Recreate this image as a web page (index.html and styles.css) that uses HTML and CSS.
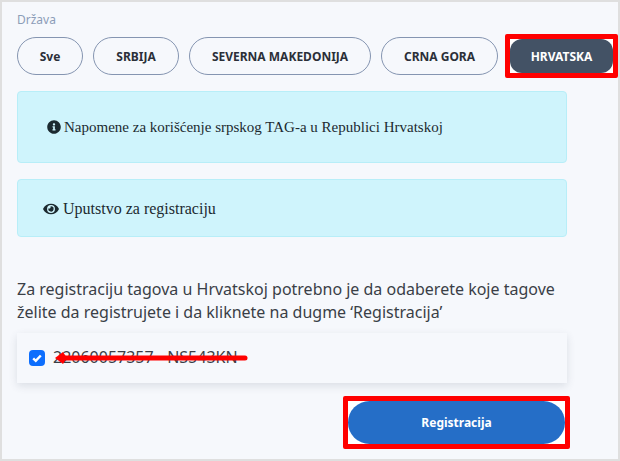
FILE: index.html
```html
<!DOCTYPE html>
<html lang="hr">
<head>
<meta charset="utf-8">
<title>Država</title>
<link rel="stylesheet" href="styles.css">
</head>
<body>
<main class="frame">
  <div class="label">Država</div>
  <div class="filters">
    <button class="pill pill-sve">Sve</button>
    <button class="pill pill-srb">SRBIJA</button>
    <button class="pill pill-mk">SEVERNA MAKEDONIJA</button>
    <button class="pill pill-cg">CRNA GORA</button>
    <span class="mark mark-active"><button class="pill-active">HRVATSKA</button></span>
  </div>
  <div class="alert alert-info">
    <svg class="ico ico-info" viewBox="0 0 512 512"><path d="M256 8C119.043 8 8 119.083 8 256c0 136.997 111.043 248 248 248s248-111.003 248-248C504 119.083 392.957 8 256 8zm0 110c23.196 0 42 18.804 42 42s-18.804 42-42 42-42-18.804-42-42 18.804-42 42-42zm56 254c0 6.627-5.373 12-12 12h-88c-6.627 0-12-5.373-12-12v-24c0-6.627 5.373-12 12-12h12v-64h-12c-6.627 0-12-5.373-12-12v-24c0-6.627 5.373-12 12-12h64c6.627 0 12 5.373 12 12v100h12c6.627 0 12 5.373 12 12v24z"/></svg>
    <span>Napomene za korišćenje srpskog TAG-a u Republici Hrvatskoj</span>
  </div>
  <div class="alert alert-guide">
    <svg class="ico ico-eye" viewBox="0 0 576 512"><path d="M572.52 241.4C518.29 135.59 410.93 64 288 64S57.68 135.64 3.48 241.41a32.35 32.35 0 0 0 0 29.19C57.71 376.41 165.07 448 288 448s230.32-71.64 284.52-177.41a32.35 32.35 0 0 0 0-29.19zM288 400a144 144 0 1 1 144-144 143.93 143.93 0 0 1-144 144zm0-240a95.31 95.31 0 0 0-25.31 3.79 47.85 47.85 0 0 1-66.9 66.9A95.78 95.78 0 1 0 288 160z"/></svg>
    <span>Uputstvo za registraciju</span>
  </div>
  <p class="intro">Za registraciju tagova u Hrvatskoj potrebno je da odaberete koje tagove želite da registrujete i da kliknete na dugme ‘Registracija’</p>
  <div class="card">
    <span class="check"><svg viewBox="0 0 16 16"><path d="M4.2 8.400l2.600 2.500 5-5.400" fill="none" stroke="#fff" stroke-width="2.400"/></svg></span>
    <span class="tag">22060057357 - NS543KN</span>
    <svg class="arrow" viewBox="0 0 200 14"><path d="M8 7H190" stroke="#f00" stroke-width="5" stroke-linecap="round"/><path d="M0 7L8 1 12 7 8 13z" fill="#f00"/></svg>
  </div>
  <div class="actions">
    <span class="mark"><button class="submit">Registracija</button></span>
  </div>
</main>
</body>
</html>
```
FILE: styles.css
```css
* { box-sizing: border-box; }
html, body { margin: 0; padding: 0; }
body { width: 620px; height: 461px; overflow: hidden; background: #f6f8fc; }
.frame {
  width: 620px;
  height: 461px;
  padding: 10px 0 0 15px;
  border: 2px solid #dfdfdf;
  background: #f6f8fc;
  font-family: "Noto Sans", sans-serif;
}
.label {
  height: 22px;
  font-size: 12px;
  line-height: 15px;
  color: #8c9db8;
}
.filters { display: flex; align-items: center; height: 44px; }
.pill {
  height: 38px;
  margin-right: 10px;
  padding: 0;
  border: 1px solid #8595b1;
  border-radius: 19px;
  background: #f6f8fc;
  color: #2b2f38;
  font: 700 12px "Noto Sans", sans-serif;
}
.pill-sve { width: 66px; }
.pill-srb { width: 86px; }
.pill-mk { width: 182px; }
.pill-cg { width: 117px; margin-right: 7px; }
.mark {
  display: inline-block;
  border: 5px solid #f00;
  border-radius: 2px;
  background: #fff;
}
.mark-active { width: 113px; height: 44px; }
.pill-active {
  display: block;
  width: 103px;
  height: 34px;
  padding: 0;
  border: 0;
  border-radius: 12px;
  background: #435265;
  color: #fff;
  font: 700 12px "Noto Sans", sans-serif;
}
.alert {
  display: flex;
  align-items: center;
  width: 550px;
  border: 1px solid #b8eef8;
  border-radius: 4px;
  background: #cff4fc;
  color: #1c2a30;
  font-family: "Liberation Serif", serif;
}
.alert-info { height: 72px; margin-top: 13px; padding-left: 29px; gap: 3px; font-size: 15px; }
.alert-guide { height: 58px; margin-top: 16px; padding: 2px 0 0 25px; gap: 4px; font-size: 16px; }
.ico { display: block; fill: #1c2a30; flex: none; }
.ico-info { width: 14px; height: 14px; }
.ico-eye { width: 16px; height: 14px; }
.intro {
  width: 550px;
  margin: 41px 0 0;
  font-size: 16px;
  line-height: 23px;
  color: #3a3f47;
}
.card {
  position: relative;
  display: flex;
  align-items: center;
  width: 550px;
  height: 50px;
  margin-top: 9px;
  padding-left: 12px;
  gap: 8px;
  background: #f6f8fc;
  box-shadow: 0 3px 8px rgba(60, 70, 90, 0.14);
  font-size: 16px;
  line-height: 20px;
  color: #3a3f47;
}
.tag { margin-top: -2px; }
.check { display: block; width: 16px; height: 16px; border-radius: 4px; background: #0d6efd; }
.check svg { display: block; width: 16px; height: 16px; }
.arrow { position: absolute; left: 38px; top: 18px; width: 200px; height: 14px; }
.actions { display: flex; justify-content: flex-end; width: 553px; margin-top: 13px; }
.actions .mark { width: 227px; height: 53px; }
.submit {
  display: block;
  width: 217px;
  height: 43px;
  padding: 0;
  border: 0;
  border-radius: 21.500px;
  background: #256ec7;
  color: #fff;
  font: 700 12px "Noto Sans", sans-serif;
}
```
